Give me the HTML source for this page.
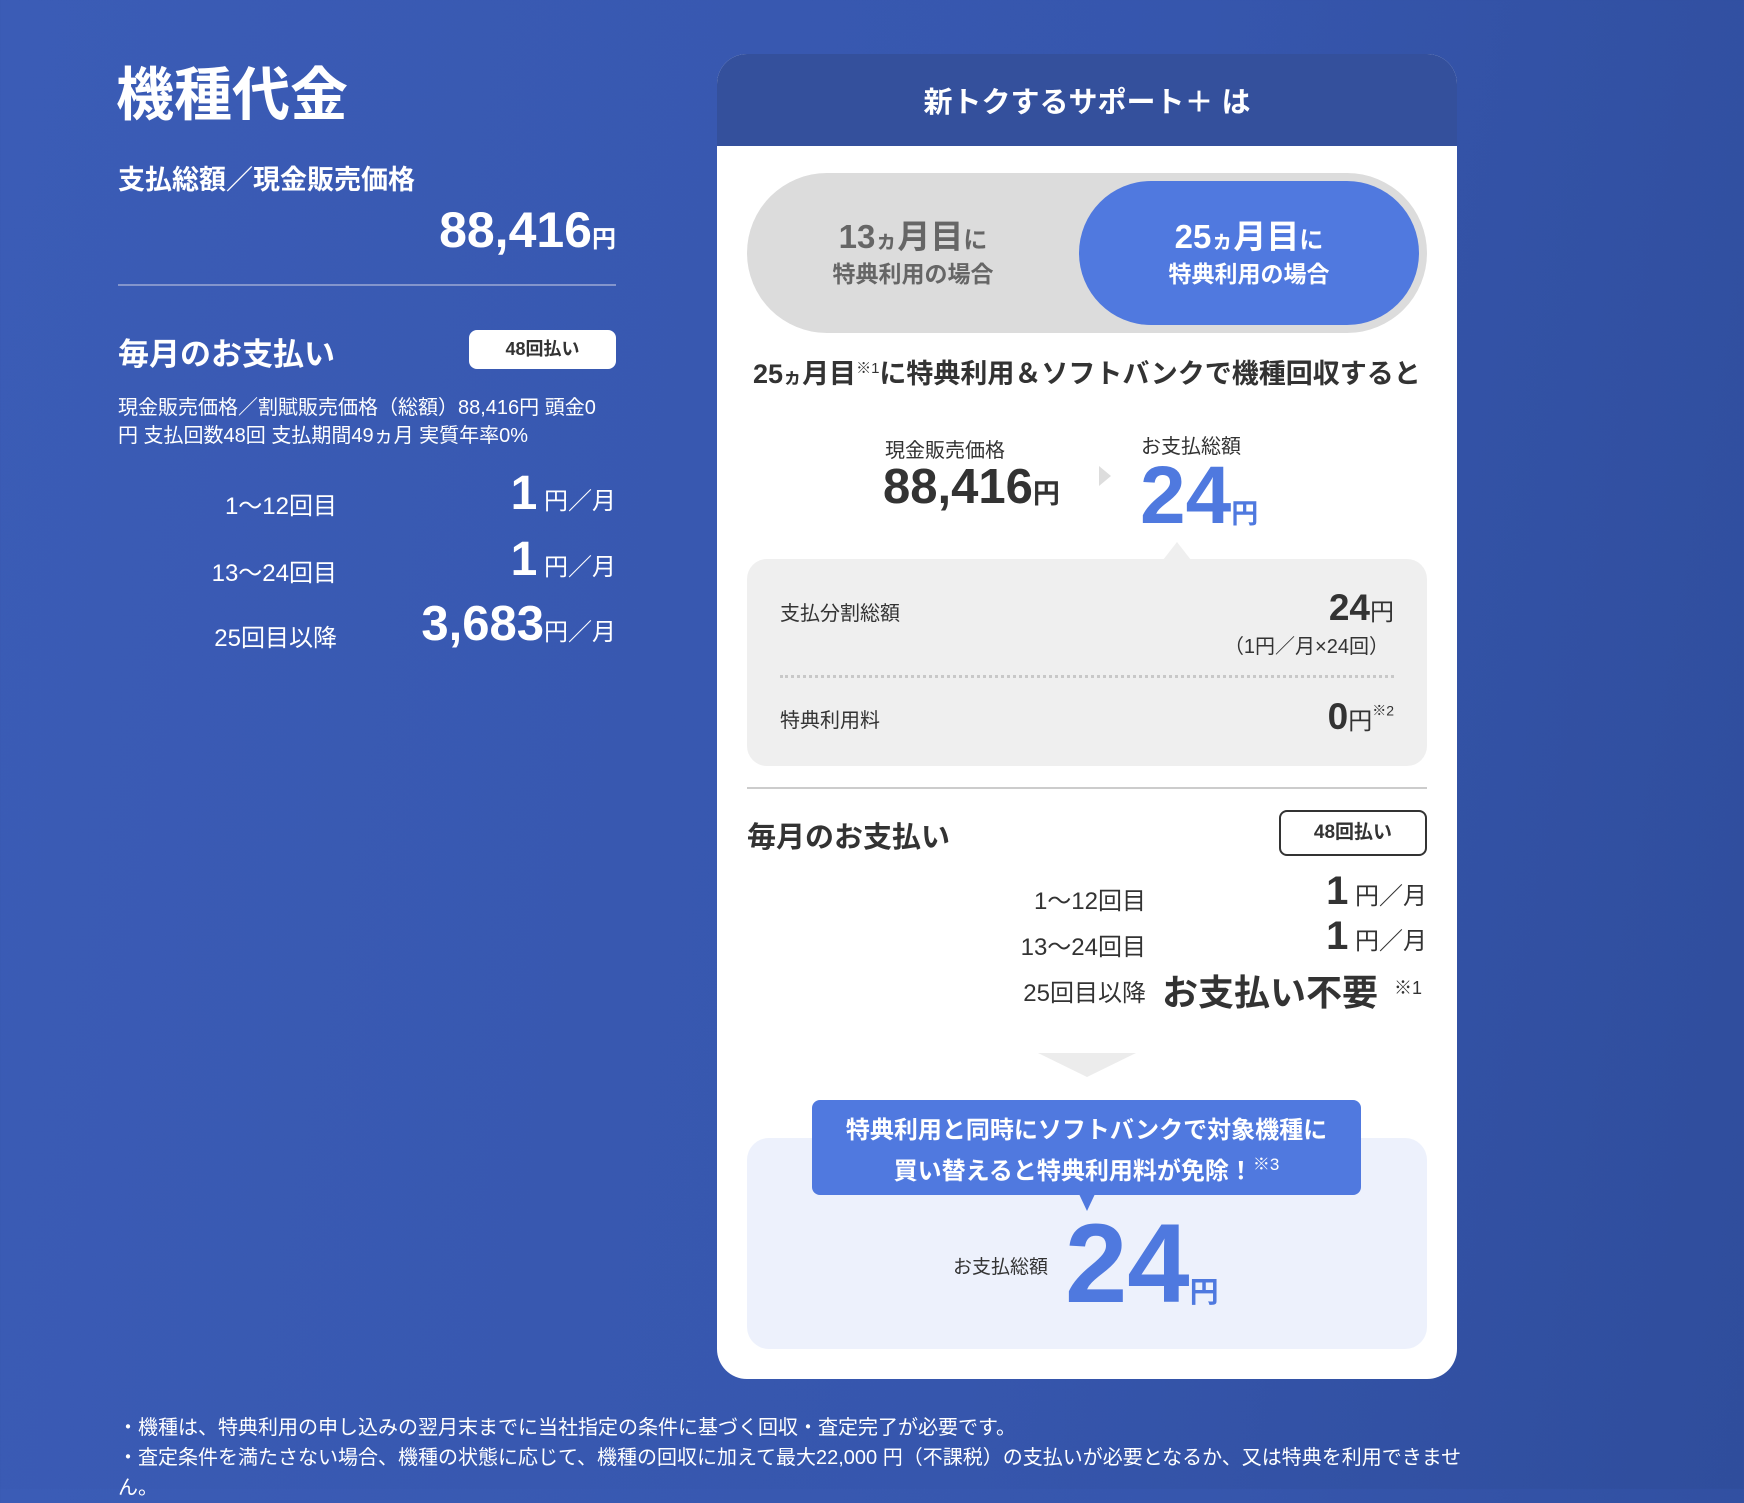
<!DOCTYPE html>
<html><head><meta charset="utf-8"><style>
*{margin:0;padding:0;box-sizing:border-box}
body{width:1744px;height:1489px;overflow:hidden;background:linear-gradient(100deg,#3b5cb6 0%,#3656ad 60%,#2f4d9c 100%);font-family:"Liberation Sans","Noto Sans CJK JP",sans-serif;color:#fff;position:relative}
.a{position:absolute;white-space:nowrap}
.b{font-weight:bold}
.r{text-align:right}
.card{position:absolute;left:717px;top:54px;width:740px;height:1325px;background:#fff;border-radius:30px;overflow:hidden;color:#333}
.hd{position:absolute;left:0;top:0;width:740px;height:92px;background:#34509c;color:#fff;font-size:29px;font-weight:bold;text-align:center;line-height:98px}
</style></head><body>
<div class="a b" style="left:116px;top:48px;font-size:58px">機種代金</div>
<div class="a b" style="left:118px;top:158px;font-size:27px">支払総額／現金販売価格</div>
<div class="a b r" style="right:1128px;top:201px;font-size:50px">88,416<span style="font-size:24px">円</span></div>
<div class="a" style="left:118px;top:284px;width:498px;height:2px;background:#8395cc"></div>
<div class="a b" style="left:118px;top:329px;font-size:31px">毎月のお支払い</div>
<div class="a b" style="left:469px;top:330px;width:147px;height:39px;background:#fff;border-radius:8px;color:#333;font-size:18px;text-align:center;line-height:39px">48回払い</div>
<div class="a" style="left:118px;top:394px;font-size:20px;line-height:28px;white-space:normal;width:492px">現金販売価格／割賦販売価格（総額）88,416円 頭金0円 支払回数48回 支払期間49ヵ月 実質年率0%</div>
<div class="a r" style="right:1407px;top:486px;font-size:24px">1〜12回目</div>
<div class="a r" style="right:1128px;top:466px;font-size:24px"><span class="b" style="font-size:48px">1</span> 円／月</div>
<div class="a r" style="right:1407px;top:553px;font-size:24px">13〜24回目</div>
<div class="a r" style="right:1128px;top:532px;font-size:24px"><span class="b" style="font-size:48px">1</span> 円／月</div>
<div class="a r" style="right:1407px;top:618px;font-size:24px">25回目以降</div>
<div class="a r" style="right:1128px;top:596px;font-size:24px"><span class="b" style="font-size:49px">3,683</span>円／月</div>

<div class="card">
<div class="hd">新トクするサポート＋ は</div>
<div class="a" style="left:30px;top:119px;width:680px;height:160px;background:#dcdcdc;border-radius:80px"></div>
<div class="a" style="left:362px;top:127px;width:340px;height:144px;background:#5079df;border-radius:72px"></div>
<div class="a b" style="left:30px;top:164px;width:332px;text-align:center;color:#666;font-size:33px;line-height:38px">13<span style="font-size:22px">ヵ</span>月目<span style="font-size:24px">に</span><br><span style="font-size:23px;line-height:28px;display:block">特典利用の場合</span></div>
<div class="a b" style="left:362px;top:164px;width:340px;text-align:center;color:#fff;font-size:33px;line-height:38px">25<span style="font-size:22px">ヵ</span>月目<span style="font-size:24px">に</span><br><span style="font-size:23px;line-height:28px;display:block">特典利用の場合</span></div>
<div class="a b" style="left:36px;top:298px;font-size:27px">25<span style="font-size:19px">ヵ</span>月目<sup style="font-size:15px;font-weight:normal">※1</sup>に特典利用＆ソフトバンクで機種回収すると</div>
<div class="a" style="left:168px;top:380px;font-size:20px">現金販売価格</div>
<div class="a b" style="left:166px;top:405px;font-size:49px">88,416<span style="font-size:27px">円</span></div>
<div class="a" style="left:382px;top:412px;width:0;height:0;border-left:12px solid #ddd;border-top:10px solid transparent;border-bottom:10px solid transparent"></div>
<div class="a" style="left:424px;top:376px;font-size:20px">お支払総額</div>
<div class="a b" style="left:423px;top:392px;font-size:82px;color:#4f79df;line-height:100px">24<span style="font-size:27px">円</span></div>
<div class="a" style="left:30px;top:505px;width:680px;height:207px;background:#efefef;border-radius:20px"></div>
<div class="a" style="left:446px;top:488px;width:0;height:0;border-bottom:18px solid #efefef;border-left:14px solid transparent;border-right:14px solid transparent"></div>
<div class="a" style="left:63px;top:543px;font-size:20px">支払分割総額</div>
<div class="a b r" style="right:63px;top:533px;font-size:37px">24<span style="font-size:24px;font-weight:normal">円</span></div>
<div class="a r" style="right:68px;top:576px;font-size:20px">（1円／月×24回）</div>
<div class="a" style="left:63px;top:621px;width:614px;border-top:3px dotted #c8c8c8"></div>
<div class="a" style="left:63px;top:650px;font-size:20px">特典利用料</div>
<div class="a b r" style="right:63px;top:642px;font-size:37px">0<span style="font-size:24px;font-weight:normal">円</span><sup style="font-size:14px;font-weight:normal">※2</sup></div>
<div class="a" style="left:30px;top:733px;width:680px;height:2px;background:#ccc"></div>
<div class="a b" style="left:30px;top:760px;font-size:29px">毎月のお支払い</div>
<div class="a b" style="left:562px;top:756px;width:148px;height:46px;border:2px solid #333;border-radius:8px;font-size:19px;text-align:center;line-height:42px">48回払い</div>
<div class="a r" style="right:311px;top:827px;font-size:24px">1〜12回目</div>
<div class="a r" style="right:30px;top:815px;font-size:24px"><span class="b" style="font-size:40px">1</span> 円／月</div>
<div class="a r" style="right:311px;top:873px;font-size:24px">13〜24回目</div>
<div class="a r" style="right:30px;top:860px;font-size:24px"><span class="b" style="font-size:40px">1</span> 円／月</div>
<div class="a r" style="right:311px;top:919px;font-size:24px">25回目以降</div>
<div class="a b" style="left:445px;top:910px;font-size:36px">お支払い不要</div>
<div class="a" style="left:677px;top:920px;font-size:18px">※1</div>
<div class="a" style="left:321px;top:999px;width:0;height:0;border-top:24px solid #ececec;border-left:49px solid transparent;border-right:49px solid transparent"></div>
<div class="a" style="left:30px;top:1084px;width:680px;height:211px;background:#edf1fc;border-radius:22px"></div>
<div class="a" style="left:95px;top:1046px;width:549px;height:95px;background:#5079df;border-radius:8px"></div>
<div class="a" style="left:362px;top:1140px;width:0;height:0;border-top:17px solid #5079df;border-left:8px solid transparent;border-right:8px solid transparent"></div>
<div class="a b" style="left:95px;top:1060px;width:549px;text-align:center;color:#fff;font-size:24px;line-height:34px">特典利用と同時にソフトバンクで対象機種に<br>買い替えると特典利用料が免除！<sup style="font-size:17px;font-weight:normal">※3</sup></div>
<div class="a" style="left:236px;top:1198px;font-size:19px">お支払総額</div>
<div class="a b" style="left:348px;top:1150px;font-size:112px;color:#4f79df;line-height:120px">24<span style="font-size:29px">円</span></div>
</div>

<div class="a" style="left:118px;top:1413px;font-size:20px;line-height:30px">・機種は、特典利用の申し込みの翌月末までに当社指定の条件に基づく回収・査定完了が必要です。<br>・査定条件を満たさない場合、機種の状態に応じて、機種の回収に加えて最大22,000 円（不課税）の支払いが必要となるか、又は特典を利用できませ<br>ん。</div>
</body></html>
